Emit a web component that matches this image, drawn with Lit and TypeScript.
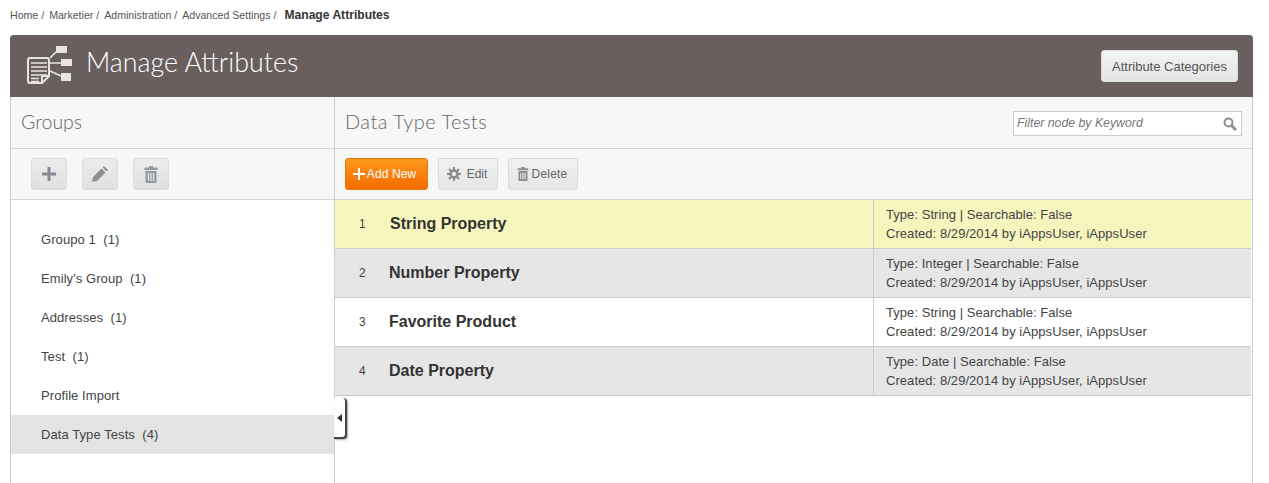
import { LitElement, html, css, svg } from "lit";
import { customElement } from "lit/decorators.js";

const trash = (c: string) => svg`<svg class="t" viewBox="0 0 14 17"><path fill="${c}" fill-rule="evenodd" d="M5 0h4v1.500h3.500l1 .8V4H.5V2.300l1-.8H5zM1.500 5h11v11a1 1 0 0 1-1 1h-9a1 1 0 0 1-1-1zM3.800 7v8h1.300V7zM6.350 7v8h1.300V7zM8.900 7v8h1.300V7z"/></svg>`;

@customElement("app-root")
export class AppRoot extends LitElement {
  static styles = css`
    :host { display: block; height: 483px; overflow: hidden; background: #fff; font-family: "Liberation Sans", Arial, sans-serif; color: #444; }
    .crumbs { display: flex; align-items: center; height: 35px; padding: 0 0 5px 10px; box-sizing: border-box; font-size: 10.6px; color: #555; }
    .crumbs span { margin-right: 5px; }
    .crumbs b { font-size: 12.1px; color: #333; margin-left: 3px; }
    .panel { margin: 0 16px 0 10px; border: 1px solid #ccc; border-bottom: 0; border-radius: 4px 4px 0 0; height: 448px; box-sizing: border-box; display: flex; flex-direction: column; }
    .head { height: 62px; margin: -1px -1px 0; background: #6a5f5f; border-radius: 4px 4px 0 0; display: flex; align-items: center; justify-content: space-between; padding: 0 15px 0 17px; flex: none; }
    .head-l { display: flex; align-items: center; gap: 13px; }
    h1 { font: 300 26.8px Lato, sans-serif; color: #fff; margin: 0 0 9px; }
    .cat { width: 137px; height: 32px; border: 1px solid #ddd; border-radius: 3px; background: linear-gradient(#f3f3f3, #e4e4e4); font: 13px "Liberation Sans", sans-serif; color: #555; padding: 0; display: flex; align-items: center; justify-content: center; }
    .body { display: grid; grid-template-columns: 324px 1fr; flex: 1; min-height: 0; }
    .left { border-right: 1px solid #ccc; position: relative; }
    .title { height: 49px; padding-bottom: 2px; background: #f7f7f7; border-bottom: 1px solid #d4d4d4; display: flex; align-items: center; justify-content: space-between; font: 300 19.500px Lato, sans-serif; color: #666; }
    .left .title { padding-left: 10px; }
    .right .title { padding-left: 10px; padding-right: 10px; }
    .right .title > span { font-size: 20px; letter-spacing: 0.45px; margin-bottom: 2px; }
    .tools { height: 50px; background: #f7f7f7; border-bottom: 1px solid #d4d4d4; display: flex; align-items: center; }
    .left .tools { padding-left: 20px; gap: 15px; }
    .right .tools { padding-left: 10px; gap: 10px; }
    .ib { width: 36px; height: 32px; box-sizing: border-box; border: 1px solid #dcdcdc; border-radius: 3px; background: linear-gradient(#ececec, #e0e0e0); display: flex; align-items: center; justify-content: center; }
    .ib .t { width: 14px; height: 17px; }
    .btn { height: 32px; box-sizing: border-box; border: 1px solid #dcdcdc; border-radius: 3px; background: linear-gradient(#f0f0f0, #e6e6e6); display: flex; align-items: center; justify-content: center; font-size: 12px; color: #666; }
    .add { width: 83px; border-color: #e8780c; background: linear-gradient(#fb9a1e, #f56a00); color: #fff; gap: 2px; padding-right: 4px; letter-spacing: 0.1px; }
    .edit { width: 60px; gap: 6px; padding-right: 2px; }
    .del { width: 70px; gap: 3px; padding-right: 2px; letter-spacing: 0.2px; }
    .del .t { width: 12px; height: 14px; }
    .search { width: 229px; height: 25px; box-sizing: border-box; border: 1px solid #ccc; background: #fff; display: flex; align-items: center; justify-content: space-between; padding: 0 4px 0 3px; margin-top: 4px; font: italic 12.300px "Liberation Sans", sans-serif; color: #777; }
    .search span { margin-bottom: 2px; }
    .groups { padding-top: 20px; }
    .g { height: 39px; display: flex; align-items: center; padding-left: 30px; font-size: 13px; letter-spacing: 0.08px; color: #444; white-space: pre; }
    .g.on { background: #e3e3e3; }
    .toggle { position: absolute; right: -11px; top: 301px; width: 11px; height: 39px; background: #fff; border-radius: 0 3px 3px 0; box-shadow: 1px 1px 0 1px #444, 2px 2px 2px 1px #aaa; display: flex; align-items: center; justify-content: center; }
    .toggle i { width: 0; height: 0; border: 4px solid transparent; border-right: 5px solid #333; border-left: 0; }
    .row { display: grid; grid-template-columns: 539px 1fr; height: 49px; box-sizing: border-box; border-bottom: 1px solid #ccc; margin-right: 1px; }
    .row.y { background: #f5f5bd; }
    .row.g2 { background: #e6e6e6; }
    .main { display: flex; align-items: center; border-right: 1px solid #ccc; }
    .num { width: 54px; padding-left: 24px; box-sizing: border-box; font-size: 12px; color: #444; }
    .name { font-weight: 700; font-size: 16px; color: #333; }
    .y .name { margin-left: 1px; }
    .info { padding: 5px 0 0 12px; font-size: 13px; letter-spacing: 0.05px; line-height: 19px; color: #444; white-space: nowrap; }
  `;

  render() {
    const groups = ["Groupo 1  (1)", "Emily's Group  (1)", "Addresses  (1)", "Test  (1)", "Profile Import", "Data Type Tests  (4)"];
    const rows = [
      ["1", "String Property", "Type: String | Searchable: False", "y"],
      ["2", "Number Property", "Type: Integer | Searchable: False", "g2"],
      ["3", "Favorite Product", "Type: String | Searchable: False", ""],
      ["4", "Date Property", "Type: Date | Searchable: False", "g2"],
    ];
    return html`
      <div class="crumbs"><span>Home /</span><span>Marketier /</span><span>Administration /</span><span>Advanced Settings /</span><b>Manage Attributes</b></div>
      <div class="panel">
        <div class="head">
          <div class="head-l">
            <svg width="46" height="42" viewBox="0 0 46 42">
              <path fill="none" stroke="#e8e4e4" stroke-width="1.600" d="M23 13l6-6M23 18h11M23 26l11 5"/>
              <path fill="#e8e4e4" d="M29 1h11v7H29zM34 14h11v7H34zM34 28h10v8H34z"/>
              <path fill="none" stroke="#e8e4e4" stroke-width="2" d="M3 13h17a2 2 0 0 1 2 2v16l-7 7H3a2 2 0 0 1-2-2V15a2 2 0 0 1 2-2zM21 31h-6v7"/>
              <path stroke="#e8e4e4" stroke-width="1.500" d="M4 18h16M4 22h16M4 26h16M4 30h16M4 33.500h8M4 36.500h8"/>
            </svg>
            <h1>Manage Attributes</h1>
          </div>
          <button class="cat">Attribute Categories</button>
        </div>
        <div class="body">
          <div class="left">
            <div class="title">Groups</div>
            <div class="tools">
              <div class="ib"><svg width="14" height="14" viewBox="0 0 14 14"><path fill="#858b92" d="M5.500 0h3v5.500H14v3H8.500V14h-3V8.500H0v-3h5.500z"/></svg></div>
              <div class="ib"><svg width="16" height="16" viewBox="0 0 16 16"><path fill="#8f8f8f" d="M12 0l4 4-1.500 1.500-4-4zM9.500 2.500l4 4L5 15l-5 1 1-5z"/></svg></div>
              <div class="ib">${trash("#9499a6")}</div>
            </div>
            <div class="groups">${groups.map((g, i) => html`<div class="g ${i === 5 ? "on" : ""}">${g}</div>`)}</div>
            <div class="toggle"><i></i></div>
          </div>
          <div class="right">
            <div class="title"><span>Data Type Tests</span>
              <div class="search"><span>Filter node by Keyword</span>
                <svg width="14" height="14" viewBox="0 0 14 14"><circle cx="5.500" cy="5.500" r="4" fill="none" stroke="#8d8d8d" stroke-width="2"/><path stroke="#8d8d8d" stroke-width="3" d="M8.500 8.500l4.500 4.500"/></svg>
              </div>
            </div>
            <div class="tools">
              <div class="btn add"><svg width="12" height="12" viewBox="0 0 12 12"><path fill="#fff" d="M5 0h2v5h5v2H7v5H5V7H0V5h5z"/></svg>Add New</div>
              <div class="btn edit"><svg width="14" height="14" viewBox="0 0 14 14"><circle cx="7" cy="7" r="3.500" fill="none" stroke="#8a8a8a" stroke-width="2.500"/><path stroke="#8a8a8a" stroke-width="2" d="M7 0v3M7 11v3M0 7h3M11 7h3M2 2l2 2M10 10l2 2M2 12l2-2M10 4l2-2"/></svg>Edit</div>
              <div class="btn del">${trash("#8d8d8d")}Delete</div>
            </div>
            ${rows.map((r) => html`<div class="row ${r[3]}">
              <div class="main"><div class="num">${r[0]}</div><div class="name">${r[1]}</div></div>
              <div class="info">${r[2]}<br />Created: 8/29/2014 by iAppsUser, iAppsUser</div>
            </div>`)}
          </div>
        </div>
      </div>
    `;
  }
}
